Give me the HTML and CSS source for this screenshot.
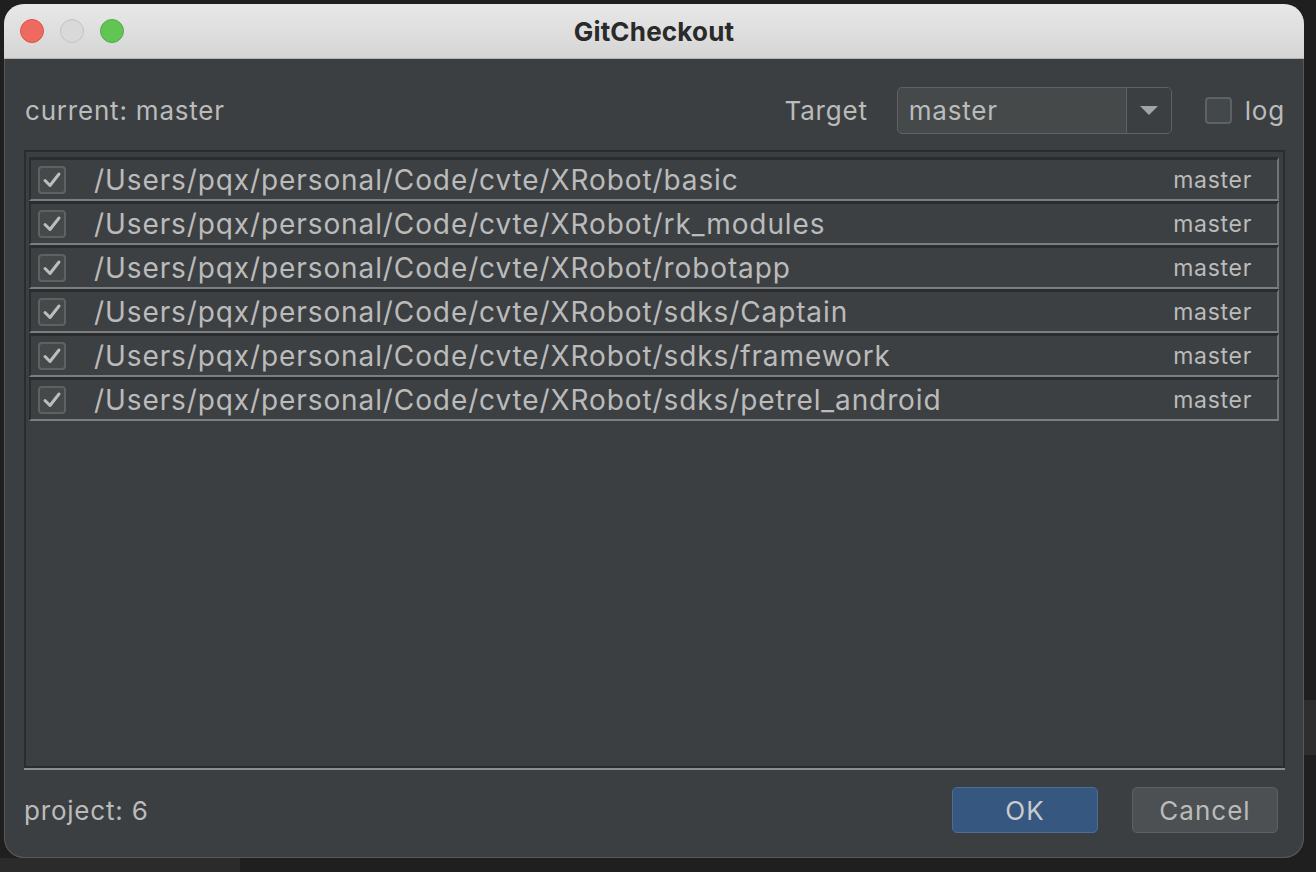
FILE: index.html
```html
<!DOCTYPE html>
<html>
<head>
<meta charset="utf-8">
<link rel="stylesheet" href="styles.css">
</head>
<body>
<div class="window">
  <div class="titlebar">
    <div class="lights">
      <span class="light red"></span>
      <span class="light gray"></span>
      <span class="light green"></span>
    </div>
    <div class="title">GitCheckout</div>
  </div>
  <div class="content">
    <div class="toprow">
      <div class="label current">current: master</div>
      <div class="spacer"></div>
      <div class="label target">Target</div>
      <div class="combo">
        <div class="combo-value">master</div>
        <div class="combo-arrow"><svg width="18" height="10" viewBox="0 0 18 10"><path d="M0 0 H18 L9 9 Z" fill="#a2a4a6"/></svg></div>
      </div>
      <div class="logbox"></div>
      <div class="label log">log</div>
    </div>
    <div class="list">
      <div class="row">
        <div class="cb"><svg width="28" height="28" viewBox="0 0 28 28"><path d="M7 14.5 L12 19.5 L21 8" fill="none" stroke="#bdbdbd" stroke-width="3" stroke-linecap="round" stroke-linejoin="round"/></svg></div>
        <div class="path">/Users/pqx/personal/Code/cvte/XRobot/basic</div>
        <div class="branch">master</div>
      </div>
      <div class="row">
        <div class="cb"><svg width="28" height="28" viewBox="0 0 28 28"><path d="M7 14.5 L12 19.5 L21 8" fill="none" stroke="#bdbdbd" stroke-width="3" stroke-linecap="round" stroke-linejoin="round"/></svg></div>
        <div class="path">/Users/pqx/personal/Code/cvte/XRobot/rk_modules</div>
        <div class="branch">master</div>
      </div>
      <div class="row">
        <div class="cb"><svg width="28" height="28" viewBox="0 0 28 28"><path d="M7 14.5 L12 19.5 L21 8" fill="none" stroke="#bdbdbd" stroke-width="3" stroke-linecap="round" stroke-linejoin="round"/></svg></div>
        <div class="path">/Users/pqx/personal/Code/cvte/XRobot/robotapp</div>
        <div class="branch">master</div>
      </div>
      <div class="row">
        <div class="cb"><svg width="28" height="28" viewBox="0 0 28 28"><path d="M7 14.5 L12 19.5 L21 8" fill="none" stroke="#bdbdbd" stroke-width="3" stroke-linecap="round" stroke-linejoin="round"/></svg></div>
        <div class="path">/Users/pqx/personal/Code/cvte/XRobot/sdks/Captain</div>
        <div class="branch">master</div>
      </div>
      <div class="row">
        <div class="cb"><svg width="28" height="28" viewBox="0 0 28 28"><path d="M7 14.5 L12 19.5 L21 8" fill="none" stroke="#bdbdbd" stroke-width="3" stroke-linecap="round" stroke-linejoin="round"/></svg></div>
        <div class="path">/Users/pqx/personal/Code/cvte/XRobot/sdks/framework</div>
        <div class="branch">master</div>
      </div>
      <div class="row">
        <div class="cb"><svg width="28" height="28" viewBox="0 0 28 28"><path d="M7 14.5 L12 19.5 L21 8" fill="none" stroke="#bdbdbd" stroke-width="3" stroke-linecap="round" stroke-linejoin="round"/></svg></div>
        <div class="path">/Users/pqx/personal/Code/cvte/XRobot/sdks/petrel_android</div>
        <div class="branch">master</div>
      </div>
    </div>
    <div class="footer">
      <div class="label project">project: 6</div>
      <div class="spacer"></div>
      <button class="btn ok">OK</button>
      <button class="btn cancel">Cancel</button>
    </div>
  </div>
</div>
</body>
</html>
```

FILE: styles.css
```css
html, body {
  margin: 0;
  padding: 0;
}
body {
  width: 1316px;
  height: 872px;
  overflow: hidden;
  font-family: Inter, "Noto Sans", "Liberation Sans", sans-serif;
  background:
    linear-gradient(#2b2b2b, #2b2b2b) 0 858px / 240px 14px no-repeat,
    linear-gradient(#2e2e2e, #2e2e2e) 1304px 700px / 12px 55px no-repeat,
    #1f1f1f;
}
.window {
  margin: 4px 0 0 4px;
  width: 1300px;
  height: 854px;
  border-radius: 20px;
  overflow: hidden;
  display: flex;
  flex-direction: column;
  background: #3c3f41;
  box-shadow: inset 0 0 0 1px #56595b;
}
.titlebar {
  height: 54px;
  flex: none;
  background: linear-gradient(#e8e8e8, #d5d5d5);
  border-bottom: 1px solid #b3b3b3;
  display: flex;
  align-items: center;
  position: relative;
}
.lights {
  display: flex;
  gap: 16px;
  padding-left: 16px;
}
.light {
  width: 24px;
  height: 24px;
  border-radius: 50%;
  box-sizing: border-box;
}
.light.red { background: #ee6a5f; border: 1px solid #d9544a; }
.light.gray { background: #d9d9d9; border: 1px solid #c2c2c2; }
.light.green { background: #61c554; border: 1px solid #4fad43; }
.title {
  position: absolute;
  left: 0;
  right: 0;
  top: 0;
  bottom: 0;
  display: flex;
  align-items: center;
  justify-content: center;
  font-weight: 700;
  font-size: 26px;
  color: #2a2a2a;
  letter-spacing: 0.2px;
}
.content {
  flex: 1;
  display: flex;
  flex-direction: column;
  padding: 28px 19px 25px 20px;
}
.label {
  font-size: 26px;
  color: #bbbbbb;
  letter-spacing: 0.8px;
}
.toprow {
  display: flex;
  align-items: center;
  height: 47px;
}
.current { margin-left: 1px; }
.spacer { flex: 1; }
.target { margin-right: 29px; }
.combo {
  width: 275px;
  height: 47px;
  box-sizing: border-box;
  border: 1px solid #5f6264;
  border-radius: 5px;
  background: #45494a;
  display: flex;
  overflow: hidden;
}
.combo-value {
  flex: 1;
  display: flex;
  align-items: center;
  padding-left: 11px;
  font-size: 26px;
  color: #bbbbbb;
  letter-spacing: 0.8px;
}
.combo-arrow {
  width: 44px;
  border-left: 1px solid #5f6264;
  background: #3c3f41;
  display: flex;
  align-items: center;
  justify-content: center;
}
.logbox {
  margin-left: 33px;
  width: 27px;
  height: 27px;
  box-sizing: border-box;
  border: 2px solid #5e6263;
  border-radius: 4px;
  background: #43494a;
}
.log { margin-left: 13px; margin-right: 0; }
.list {
  margin-top: 16px;
  height: 618px;
  box-sizing: border-box;
  border: 2px solid #2a2c2d;
  box-shadow: 0 2px 0 #8b8d8f;
  padding: 5px 4px 0 3px;
  display: flex;
  flex-direction: column;
  background: #3c3f41;
}
.row {
  height: 44px;
  box-sizing: border-box;
  border-top: 3px solid #2a2c2d;
  border-left: 2px solid #2a2c2d;
  border-bottom: 2px solid #7b7f82;
  border-right: 2px solid #6f7376;
  display: flex;
  align-items: center;
  background: #3d4042;
}
.cb {
  margin-left: 7px;
  width: 28px;
  height: 28px;
  box-sizing: border-box;
  border: 2px solid #5e6263;
  border-radius: 4px;
  background: #45494a;
  display: flex;
  align-items: center;
  justify-content: center;
}
.cb svg { flex: none; margin: -2px; }
.path {
  margin-left: 28px;
  flex: 1;
  font-size: 28px;
  color: #bbbbbb;
  letter-spacing: 0.9px;
}
.branch {
  font-size: 23px;
  color: #bbbbbb;
  letter-spacing: 0.7px;
  margin-right: 25px;
}
.footer {
  margin-top: 19px;
  display: flex;
  align-items: center;
  height: 46px;
  padding-right: 7px;
}
.btn {
  width: 146px;
  height: 46px;
  box-sizing: border-box;
  border-radius: 5px;
  font-family: Inter, "Noto Sans", "Liberation Sans", sans-serif;
  font-size: 26px;
  letter-spacing: 1px;
  color: #c9ccce;
  padding: 0;
}
.ok {
  margin-right: 0;
  background: #365880;
  border: 1px solid #4b6e95;
}
.cancel {
  margin-left: 34px;
  background: #4c5052;
  border: 1px solid #5e6163;
  color: #bbbbbb;
}
```
